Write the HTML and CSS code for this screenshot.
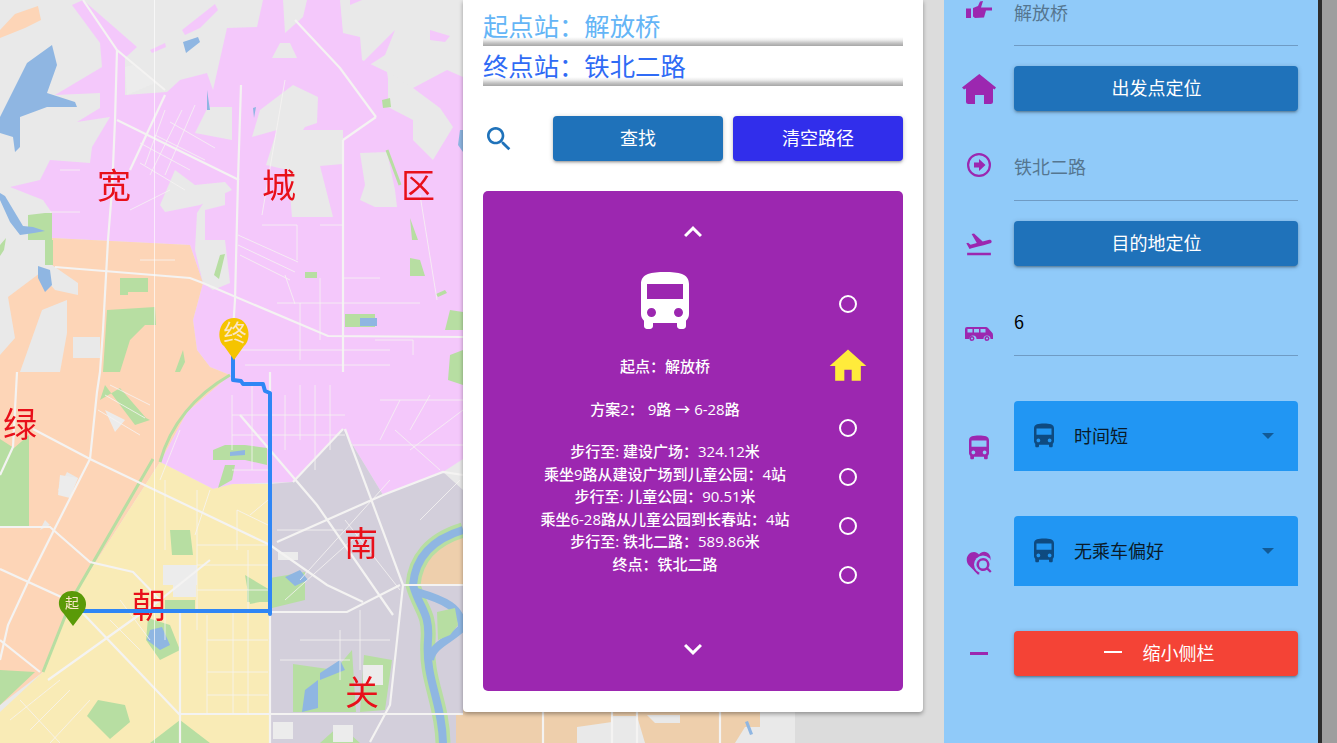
FILE: index.html
```html
<!DOCTYPE html>
<html lang="zh">
<head>
<meta charset="utf-8">
<title>公交路径查询</title>
<link rel="stylesheet" href="styles.css">
</head>
<body>
<div class="app">
  <main class="stage">
    <svg class="map" viewBox="0 0 795 743" width="795" height="743" aria-label="地图">
      <rect class="base" width="795" height="743"/>
      <!-- districts -->
      <path class="orange" d="M0 30L15 14 38 6 41 20 25 28 0 38Z"/>
      <path class="pink" d="M72 5L83 0 137 47 125 58 125 95 167 92 180 80 207 73 213 90 227 28 257 27 263 0 283 0 285 33 303 17 307 0 340 0 343 33 360 37 362 60 387 72 392 105 413 88 447 70 463 77 463 459 443 472 383 495 343 429 293 482 233 484 213 489 160 462 187 412 230 375 210 367 197 350 193 320 203 283 190 245 52 238 52 213 43 200 10 187 40 180 50 160 90 163 92 147 110 117 77 122 100 108 100 93 55 95 102 67 100 43Z"/>
      <path class="pink" d="M150 50L165 43 166 47 152 53ZM182 30L215 4 218 10 200 28 185 35ZM363 62L395 30 385 55 368 66ZM430 30L450 36 445 42 430 40ZM350 0H362L350 5Z"/>
      <path class="base" d="M272 58L280 43 290 43 297 58ZM195 133L208 107 232 107 232 140ZM260 110L293 85 318 97 317 123 305 127 303 130 343 130 343 164 320 166 333 217 292 217 288 170 266 165 277 130 252 137ZM388 72L413 88 440 108 453 127 433 160 413 140 413 120 388 107ZM360 153L387 152 395 190 397 207 375 207 360 200 365 185ZM160 205L175 170 195 185 225 182 232 190 200 205 165 212ZM197 213L215 185 225 190 225 205 205 210 205 240 225 240 230 283 213 290 203 283 195 250Z"/>
      <path class="pale" d="M125 67L133 65 155 83 127 95Z"/>
      <path class="orange" d="M52 238L190 245 203 283 193 320 197 350 210 367 230 375 187 412 160 462 72 599 43 672 0 705 0 355 15 338 8 297 40 273 55 290 78 295 78 283 52 265Z"/>
      <path class="base" d="M42 310L67 300 67 333 60 372 20 372ZM73 337H100V358H73ZM67 472L78 478 68 497 58 490ZM45 520L50 525 40 530Z"/>
      <path class="yellow" d="M160 462L213 489 233 484 270 484 270 743 0 743 0 712 43 672 72 599Z"/>
      <path class="grey" d="M270 484L293 482 343 429 383 495 443 472 463 490 463 743 270 743Z"/>
      <path class="tan" d="M415 585L425 550 463 530 463 585ZM456 715L463 715 463 743 456 743Z"/>
      <path class="tan" d="M463 700H795V743H463Z"/>
      <path class="base" d="M577 743V727L612 722V716H637L645 743ZM647 715H680V723H655ZM760 712H795V743H735L745 727H760Z"/>
      <!-- parks -->
      <path class="green" d="M28 215L45 213H52V240H53V265H45V240H28Z"/>
      <path class="green" d="M103 372L107 310 155 307 156 325 145 325 130 340 120 372ZM120 278H148V292H128V295H120ZM0 245L6 238 4 250 0 256ZM220 255L225 254 219 279 214 275ZM175 372L183 350 185 362 180 372Z"/>
      <path class="green" d="M345 314H375V327H345ZM305 272H317V278H305ZM382 100L390 98 391 107 383 108ZM410 218L418 240 412 240ZM410 258L420 260 425 276 410 276ZM450 310L463 312 463 330 445 330ZM450 355L463 350 463 385 448 380ZM436 294L445 290 447 293 438 297Z"/>
      <path class="green" d="M0 439L14 448 29 435 29 527 0 527ZM100 400L120 388 146 418 150 420 135 425 105 385ZM0 670L35 672 0 705ZM213 450L225 445 245 445 267 448 267 465 245 460 213 460ZM225 465L235 465 232 480 218 488ZM170 530L190 530 193 555 172 555ZM245 575L270 590 270 600 250 604ZM165 600H195V612H165ZM148 618L170 625 180 650 160 660 146 640ZM293 664L335 670 352 650 356 712 293 712ZM87 716L98 700 125 705 130 722 110 739ZM150 743L180 720 210 743ZM320 743L340 725 360 743ZM270 578L305 572 305 600 272 608ZM364 655L392 660 385 710 360 712ZM247 590H268V602H247Z"/>
      <path class="pale" d="M163 565H197V585H163ZM60 475L78 478 70 498 58 495ZM278 552H298V560H278ZM273 722H293V739H273ZM333 725H353V742H333ZM363 665H383V685H363ZM105 410L125 420 115 432ZM173 583H196V597H173Z"/>
      <!-- water -->
      <path class="water" d="M52 45L57 65 47 93 75 102 77 107 47 107 20 117 20 147 15 152 13 137 0 133 0 117 27 63ZM183 42L198 37 200 42 186 53ZM0 193L5 196 23 226 33 227 45 231 34 233 20 235 10 222 0 200ZM38 266L50 270 52 285 45 292 38 278ZM207 90L210 110 207 110ZM253 108L256 107 254 118ZM460 130L463 130 463 152 458 145ZM360 318H377V326H360ZM150 630L162 627 170 645 160 650 147 640ZM300 570L308 580 295 586 285 577ZM230 452L245 450 245 455 230 456ZM305 690L318 680 318 708 302 712ZM320 673L340 660 345 670 320 680ZM745 722L748 721 753 734 750 735Z"/>
      <g class="river-bank"><path d="M463 530C430 540 415 560 413 585 420 610 430 612 428 640 425 680 442 700 443 743"/></g>
      <g class="river"><path d="M463 530C430 540 415 560 413 585 420 610 430 612 428 640 425 680 442 700 443 743"/><path d="M417 592C445 600 462 608 462 628 450 640 432 645 430 660"/></g>
      <path class="green" d="M437 612L455 608 458 625 450 635 438 640Z"/>
      <g class="greenline">
        <path d="M153 459L72 599 43 672"/>
        <path d="M160 462C170 425 195 395 230 375"/>
        <path d="M387 150L400 185"/>
      </g>
      <!-- main roads -->
      <g class="road-major">
        <path d="M83 0L117 50 165 90"/>
        <path d="M117 50L115 120 112 190 108 240 103 330 100 372 97 392 90 459 53 532 28 582 8 625 0 660"/>
        <path d="M117 120L239 180"/>
        <path d="M165 95L130 170"/>
        <path d="M241 85L238 180 235 300 233 330"/>
        <path d="M343 140V372"/>
        <path d="M376 117L343 140M376 117L340 68 295 20"/>
        <path d="M55 267L190 278 203 283 328 336 463 337"/>
        <path d="M33 429L90 459 270 545 327 585 363 602"/>
        <path d="M403 585H463"/>
        <path d="M0 569L72 602 180 715"/>
        <path d="M270 612H347L400 585"/>
        <path d="M277 542L383 495 443 472 463 475"/>
        <path d="M345 429L403 585 390 705 370 742"/>
        <path d="M293 482L343 429"/>
        <path d="M240 415L317 505 393 615"/>
        <path d="M180 714H463"/>
        <path d="M270 372V743"/>
        <path d="M180 612V743"/>
        <path d="M48 680L160 600 210 560M0 640L40 672"/>
        <path d="M0 527H50L90 562 133 572 160 600"/>
        <path d="M0 475L13 447 17 372"/>
        <path d="M543 712V743M612 712V743M637 712V743M720 712V743"/>
      </g>
      <g class="road-minor">
        <path d="M140 143L190 170M155 135L205 160M170 122L215 148M140 163L185 190"/>
        <path d="M165 110L145 165M182 110L150 175M195 105L165 175"/>
        <path d="M238 235L298 262M238 245L295 272M240 255L290 280"/>
        <path d="M262 225H297V260M320 225H343M295 304L285 275M277 303H420M300 303V360M320 278V340M343 278H380M375 340H413"/>
        <path d="M285 80L262 215M420 195L437 300"/>
        <path d="M233 350H390M245 365H390M413 340V355"/>
        <path d="M232 395V450M252 385V470M300 385V440M315 385V470M330 385V450M285 395V450"/>
        <path d="M232 415H345M232 435H345M232 470H270M350 445H463M380 400H463M400 400L380 440M430 395L410 430"/>
        <path d="M277 530H343M285 600L363 530M300 580L390 480M345 520L400 590M340 630V680M360 610V670M300 640H390M280 660H350"/>
        <path d="M165 480V550M197 490V630M197 545H268M197 565H268M197 590H268M165 612V640M207 615V714M233 612V714M248 550V714M207 640H268M207 672H268M207 695H268"/>
        <path d="M160 480L180 430M210 490L195 535M237 510L268 525M237 510V550M250 515L268 500"/>
        <path d="M98 410L140 435M105 395L145 418M110 385L150 405"/>
        <path d="M110 620L140 650M120 600L150 640"/>
        <path d="M10 720L60 680M30 730L70 690M50 743L90 700M20 700L60 743"/>
        <path d="M410 450L463 410M420 520L460 480M395 430L440 470"/>
        <path d="M130 210L170 190M140 260H175M80 212H50M80 170H60"/>
      </g>
      <line class="seam" x1="154.5" y1="0" x2="154.5" y2="743"/>
      <!-- district labels -->
      <g class="label">
        <text x="114" y="198">宽</text>
        <text x="279" y="198">城</text>
        <text x="418" y="198">区</text>
        <text x="20" y="437">绿</text>
        <text x="149" y="618">朝</text>
        <text x="361" y="556">南</text>
        <text x="362" y="705">关</text>
      </g>
      <!-- route -->
      <path class="route" d="M233 355V380L241 381 243 384H263L265 391 270 393V614M270 611H75"/>
      <!-- markers -->
      <path class="pin-end" d="M234 360L224 346C216 340 218 318 234 318S252 340 244 346Z"/>
      <text class="pin-text-end" x="235" y="341">终</text>
      <path class="pin-start" d="M73 626L64 614C54 604 60 591 72 591S91 604 82 614Z"/>
      <text class="pin-text-start" x="72" y="608">起</text>
    </svg>

    <section class="panel">
      <div class="station station-start">起点站：解放桥</div>
      <div class="station station-end">终点站：铁北二路</div>
      <div class="search-row">
        <svg class="search-icon" viewBox="0 0 24 24"><path d="M15.5 14h-.79l-.28-.27C15.41 12.59 16 11.11 16 9.5 16 5.91 13.09 3 9.5 3S3 5.91 3 9.5 5.91 16 9.5 16c1.61 0 3.09-.59 4.23-1.57l.27.28v.79l5 4.99L20.49 19l-4.99-5zm-6 0C7.01 14 5 11.99 5 9.5S7.01 5 9.5 5 14 7.01 14 9.5 11.99 14 9.5 14z"/></svg>
        <button class="btn btn-find">查找</button>
        <button class="btn btn-clear">清空路径</button>
      </div>
      <div class="carousel">
        <svg class="chevron chevron-up" viewBox="0 0 24 24"><path d="M7.41 15.41L12 10.83l4.59 4.58L18 14l-6-6-6 6z"/></svg>
        <div class="slide">
          <svg class="slide-bus" viewBox="0 0 24 24"><path d="M4 16c0 .88.39 1.67 1 2.22V20c0 .55.45 1 1 1h1c.55 0 1-.45 1-1v-1h8v1c0 .55.45 1 1 1h1c.55 0 1-.45 1-1v-1.78c.61-.55 1-1.34 1-2.22V6c0-3.5-3.58-4-8-4s-8 .5-8 4v10zm3.5 1c-.83 0-1.5-.67-1.5-1.5S6.67 14 7.5 14s1.5.67 1.5 1.5S8.33 17 7.5 17zm9 0c-.83 0-1.5-.67-1.5-1.5s.67-1.5 1.5-1.5 1.5.67 1.5 1.5-.67 1.5-1.5 1.5zm1.5-6H6V6h12v5z"/></svg>
          <p class="slide-text">起点：解放桥</p>
          <p class="slide-text">方案2： 9路 → 6-28路</p>
          <p class="slide-text">步行至: 建设广场：324.12米<br>乘坐9路从建设广场到儿童公园：4站<br>步行至: 儿童公园：90.51米<br>乘坐6-28路从儿童公园到长春站：4站<br>步行至: 铁北二路：589.86米<br>终点：铁北二路</p>
        </div>
        <svg class="chevron chevron-down" viewBox="0 0 24 24"><path d="M7.41 8.59L12 13.17l4.59-4.58L18 10l-6 6-6-6z"/></svg>
        <ul class="dots">
          <li class="dot"></li>
          <li class="dot-home"><svg viewBox="0 0 24 24"><path d="M10 20v-6h4v6h5v-8h3L12 3 2 12h3v8z"/></svg></li>
          <li class="dot"></li>
          <li class="dot"></li>
          <li class="dot"></li>
          <li class="dot"></li>
        </ul>
      </div>
    </section>
  </main>

  <aside class="sidebar">
    <div class="row row-first">
      <div class="row-icon nudge-up-first">
        <svg class="ic" width="26" height="18" viewBox="966 0 26 18"><path d="M966 8.500h5V18h-5zM973 8l5-2 2-4.500 3-.5-2 6.500h11v3h-6l-2 7-9 .5-2-1.500z"/></svg>
      </div>
      <div class="field field-muted field-first">解放桥</div>
    </div>
    <div class="row row-btn">
      <div class="row-icon">
        <svg class="ic" width="34" height="30" viewBox="962 74 34 30"><path d="M979.300 74L996 87.500 994.500 89.500 993 88.500V101.500Q993 104 990.500 104H984V95H975V104H968.500Q966 104 966 101.500V88.500L964 89.500 962 87.500Z"/></svg>
      </div>
      <button class="btn btn-wide">出发点定位</button>
    </div>
    <div class="row row-input">
      <div class="row-icon nudge-up">
        <svg class="ic" width="26" height="26" viewBox="0 0 26 26"><path d="M13 1a12 12 0 1 0 0 24 12 12 0 0 0 0-24zm0 2.200a9.800 9.800 0 1 1 0 19.600 9.800 9.800 0 0 1 0-19.600zM8 10.500h5V7l6.500 6-6.500 6v-3.500H8z"/></svg>
      </div>
      <div class="field field-muted">铁北二路</div>
    </div>
    <div class="row row-btn">
      <div class="row-icon">
        <svg class="ic" width="30" height="30" viewBox="0 0 24 24"><path d="M2.500 19h19v2h-19zm19.570-9.360c-.21-.8-1.040-1.280-1.840-1.060L14.920 10l-6.900-6.430-1.930.51 4.140 7.170-4.970 1.330-1.970-1.540-1.450.39 1.820 3.160.77 1.330 1.600-.43 5.310-1.420 4.350-1.160L21 11.490c.81-.23 1.280-1.050 1.070-1.850z"/></svg>
      </div>
      <button class="btn btn-wide">目的地定位</button>
    </div>
    <div class="row row-input row-input-last">
      <div class="row-icon nudge-down">
        <svg class="ic" width="28" height="14" viewBox="0 0 28 14"><path d="M2 0h19q1 0 2 1l3.500 4q1.500 1 1.500 3v4h-2.500a3.500 3.500 0 0 0-7 0h-7a3.500 3.500 0 0 0-7 0H0V2q0-2 2-2zM2.500 2v3.500h5V2zm6.500 0v3.500h5V2zm6.500 0v3.500h5V2z"/><path class="wheel" d="M7 9a2.500 2.500 0 1 0 0 5 2.500 2.500 0 0 0 0-5zm0 1.500a1 1 0 1 1 0 2 1 1 0 0 1 0-2zM22 9a2.500 2.500 0 1 0 0 5 2.500 2.500 0 0 0 0-5zm0 1.500a1 1 0 1 1 0 2 1 1 0 0 1 0-2z"/></svg>
      </div>
      <div class="field">6</div>
    </div>
    <div class="row row-select">
      <div class="row-icon nudge-down-lg">
        <svg class="ic" width="30" height="30" viewBox="0 0 24 24"><path d="M4 16c0 .88.39 1.670 1 2.220V20c0 .55.45 1 1 1h1c.55 0 1-.45 1-1v-1h8v1c0 .55.45 1 1 1h1c.55 0 1-.45 1-1v-1.780c.61-.55 1-1.340 1-2.220V6c0-3.500-3.580-4-8-4s-8 .5-8 4v10zm3.500 1c-.83 0-1.500-.67-1.500-1.500S6.670 14 7.500 14s1.500.67 1.500 1.500S8.330 17 7.500 17zm9 0c-.83 0-1.500-.67-1.500-1.500s.67-1.500 1.500-1.500 1.500.67 1.500 1.500-.67 1.500-1.500 1.500zm1.500-6H6V6h12v5z"/></svg>
      </div>
      <div class="select">
        <svg class="select-bus" viewBox="0 0 24 24"><path d="M4 16c0 .88.39 1.670 1 2.220V20c0 .55.45 1 1 1h1c.55 0 1-.45 1-1v-1h8v1c0 .55.45 1 1 1h1c.55 0 1-.45 1-1v-1.780c.61-.55 1-1.340 1-2.220V6c0-3.500-3.580-4-8-4s-8 .5-8 4v10zm3.500 1c-.83 0-1.500-.67-1.500-1.500S6.670 14 7.500 14s1.500.67 1.500 1.500S8.330 17 7.500 17zm9 0c-.83 0-1.500-.67-1.500-1.500s.67-1.500 1.500-1.500 1.500.67 1.500 1.500-.67 1.500-1.500 1.500zm1.500-6H6V6h12v5z"/></svg>
        <span class="select-text">时间短</span>
        <span class="caret"></span>
      </div>
    </div>
    <div class="row row-select">
      <div class="row-icon nudge-down-lg">
        <svg class="ic" width="26" height="24" viewBox="0 0 26 24">
          <path d="M12 23.500L3 14.500C-2 8.500 2 1 8 1c2 0 3.500 1 5 2.500C15 1 18 0 21 1.500c3 1.500 4.500 5 3 9z"/>
          <circle class="halo" cx="17" cy="13.500" r="9"/>
          <path d="M17 7a6.500 6.500 0 1 0 3.900 11.700L24 21.800 25.600 20.200 22.400 17A6.500 6.500 0 0 0 17 7zm0 2.500a4 4 0 1 1 0 8 4 4 0 0 1 0-8z"/>
          <path d="M8 16.500C9 20 11 22 14 23L12 23.500 8 19.500Z"/>
        </svg>
      </div>
      <div class="select">
        <svg class="select-bus" viewBox="0 0 24 24"><path d="M4 16c0 .88.39 1.670 1 2.220V20c0 .55.45 1 1 1h1c.55 0 1-.45 1-1v-1h8v1c0 .55.45 1 1 1h1c.55 0 1-.45 1-1v-1.780c.61-.55 1-1.340 1-2.220V6c0-3.500-3.580-4-8-4s-8 .5-8 4v10zm3.500 1c-.83 0-1.500-.67-1.500-1.500S6.670 14 7.500 14s1.500.67 1.500 1.500S8.330 17 7.500 17zm9 0c-.83 0-1.500-.67-1.500-1.500s.67-1.500 1.500-1.500 1.500.67 1.500 1.500-.67 1.500-1.500 1.500zm1.500-6H6V6h12v5z"/></svg>
        <span class="select-text">无乘车偏好</span>
        <span class="caret"></span>
      </div>
    </div>
    <div class="row row-btn">
      <div class="row-icon"><span class="minus minus-purple"></span></div>
      <button class="btn btn-wide btn-red"><span class="minus minus-white"></span>缩小侧栏</button>
    </div>
  </aside>
  <div class="scrollbar"></div>
</div>
</body>
</html>
```

FILE: styles.css
```css
* { box-sizing: border-box; }

html, body {
  margin: 0;
  height: 100%;
  overflow: hidden;
}

body {
  font-family: "Open Sans", "Noto Sans CJK SC", sans-serif;
  background: #dcdcdc;
}

.app {
  display: flex;
  width: 1337px;
  height: 743px;
  overflow: hidden;
}

/* map stage */
.stage {
  position: relative;
  flex: 0 0 944px;
  height: 743px;
  background: #dcdcdc;
}

.map {
  display: block;
  filter: blur(0.45px);
}

.base { fill: #e9e9e9; }
.pink { fill: #f4c8fb; }
.orange { fill: #fdd5b7; }
.yellow { fill: #f9ebb6; }
.grey { fill: #d3cfdb; }
.tan { fill: #eecfac; }
.green { fill: #b7dea2; }
.pale { fill: #ececec; }
.water { fill: #8fb6e2; }

.river-bank path { fill: none; stroke: #b7dea2; stroke-width: 15; }
.river path { fill: none; stroke: #8fb6e2; stroke-width: 8; }
.greenline path { fill: none; stroke: #b7dea2; stroke-width: 3; }
.road-major path { fill: none; stroke: #f4f3f2; stroke-width: 2.200; }
.road-minor path { fill: none; stroke: #f6f4f2; stroke-width: 1; opacity: 0.8; }
.seam { stroke: #ffffff; stroke-width: 1; opacity: 0.65; }

.label text {
  font-family: "Noto Sans CJK SC", sans-serif;
  font-size: 34px;
  fill: #e8101a;
  text-anchor: middle;
}

.route {
  fill: none;
  stroke: #2f86f5;
  stroke-width: 4;
  stroke-linejoin: round;
  stroke-linecap: round;
}

.pin-end { fill: #f5c400; }
.pin-start { fill: #5a9a08; }
.pin-text-end,
.pin-text-start {
  font-family: "Noto Sans CJK SC", sans-serif;
  text-anchor: middle;
  fill: #fbe6c8;
}
.pin-text-end { font-size: 23px; }
.pin-text-start { font-size: 14px; }

/* central panel */
.panel {
  position: absolute;
  top: 0;
  left: 463px;
  width: 460px;
  height: 712px;
  padding: 6px 20px 20px;
  background: #fff;
  border-radius: 0 0 4px 4px;
  box-shadow: 0 2px 4px rgba(0, 0, 0, 0.35);
  display: flex;
  flex-direction: column;
}

.station {
  height: 40px;
  font-family: "Noto Sans CJK SC", sans-serif;
  font-size: 25.350px;
  line-height: 38px;
  background: linear-gradient(#fff 0, #fff 31px, #ececec 34px, #c4c4c4 37px, #a6a6a6 40px);
}
.station-start { color: #64b5f6; }
.station-end { color: #2f6bf5; }

.search-row {
  display: flex;
  align-items: center;
  margin-top: 30px;
  height: 45px;
  gap: 10px;
}

.search-icon {
  width: 32px;
  height: 32px;
  fill: #1f72ba;
  margin-right: 28px;
  flex: none;
}

.btn {
  height: 45px;
  border: 0;
  border-radius: 4px;
  color: #fff;
  font-family: "Noto Sans CJK SC", sans-serif;
  font-size: 18px;
  display: flex;
  align-items: center;
  justify-content: center;
  padding: 0 0 4px;
  box-shadow: 0 2px 2px rgba(0, 0, 0, 0.14), 0 3px 1px -2px rgba(0, 0, 0, 0.12), 0 1px 5px rgba(0, 0, 0, 0.2);
}
.btn-find { width: 170px; background: #1f72ba; }
.btn-clear { width: 170px; background: #312eeb; }
.btn-wide { width: 284px; background: #1f72ba; padding-left: 1px; }
.btn-red { background: #f44336; padding: 0 0 3px 6px; }

/* carousel */
.carousel {
  position: relative;
  margin-top: 30px;
  height: 500px;
  background: #9c27b0;
  border-radius: 5px;
  display: flex;
  flex-direction: column;
  align-items: center;
  color: #fff;
}

.chevron {
  width: 36px;
  height: 36px;
  fill: #fff;
  flex: none;
}
.chevron-up { margin-top: 23px; }
.chevron-down { margin-top: auto; margin-bottom: 24px; }

.slide {
  width: 100%;
  padding-right: 56px;
  padding-top: 16px;
  text-align: center;
}

.slide-bus {
  display: block;
  width: 72px;
  height: 72px;
  fill: #fff;
  margin: 0 auto 17px;
}

.slide-text {
  margin: 0 0 20px;
  font-size: 15px;
  line-height: 22.500px;
  font-weight: 500;
}

.dots {
  position: absolute;
  top: 104px;
  right: 37px;
  width: 36px;
  margin: 0;
  padding: 0;
  list-style: none;
  display: flex;
  flex-direction: column;
  align-items: center;
  gap: 31px;
}

.dot {
  width: 18px;
  height: 18px;
  border: 2.500px solid #fff;
  border-radius: 50%;
}

.dot-home {
  width: 44px;
  height: 32px;
  margin: 6px 0;
  flex: none;
}
.dot-home svg {
  display: block;
  width: 44px;
  height: 44px;
  margin-top: -6px;
  fill: #ffeb3b;
}

/* sidebar */
.sidebar {
  flex: 0 0 374px;
  height: 743px;
  background: #90caf9;
  padding: 0 20px 0 0;
  overflow: hidden;
  display: flex;
  flex-direction: column;
}

.row {
  display: flex;
  flex: none;
}

.row-icon {
  flex: 0 0 70px;
  display: flex;
  align-items: center;
  justify-content: center;
}

.ic { fill: #9c27b0; display: block; }
.ic .halo { fill: #90caf9; }

.nudge-up-first { padding-bottom: 28px; }
.nudge-up { padding-bottom: 17px; }
.nudge-down { padding-top: 10px; }
.nudge-down-lg { padding-top: 24px; }

.row-first { height: 46px; margin-bottom: 20px; }
.row-input { height: 55px; margin-bottom: 20px; }
.row-input-last { margin-bottom: 45px; }
.row-btn { height: 45px; margin-bottom: 35px; }
.row-select { height: 70px; margin-bottom: 45px; }

.field {
  flex: 1;
  height: 55px;
  line-height: 41px;
  font-size: 18px;
  color: #000;
  font-family: "Noto Sans CJK SC", sans-serif;
  border-bottom: 1px solid #6f9bc4;
}
.field-muted { color: #557690; }
.field-first { height: 46px; line-height: 24px; }

.select {
  flex: 1;
  height: 70px;
  background: #2196f3;
  border-radius: 4px 4px 0 0;
  display: flex;
  align-items: center;
  padding: 0 24px 0 15px;
}

.select-bus {
  width: 30px;
  height: 30px;
  fill: #0e4a80;
  flex: none;
  margin-right: 15px;
}

.select-text {
  flex: 1;
  font-family: "Noto Sans CJK SC", sans-serif;
  font-size: 18px;
  color: #0a1a28;
  padding-bottom: 3px;
}

.caret {
  width: 0;
  height: 0;
  border-left: 6.500px solid transparent;
  border-right: 6.500px solid transparent;
  border-top: 6.500px solid #125a96;
}

.minus {
  display: block;
  height: 2.500px;
}
.minus-purple { width: 18px; background: #9c27b0; }
.minus-white { width: 18px; background: #fff; margin-right: 21px; }

.scrollbar {
  flex: 0 0 19px;
  height: 743px;
  background: #9e9e9e;
  border-left: 4px solid #2c2c2c;
}
```
